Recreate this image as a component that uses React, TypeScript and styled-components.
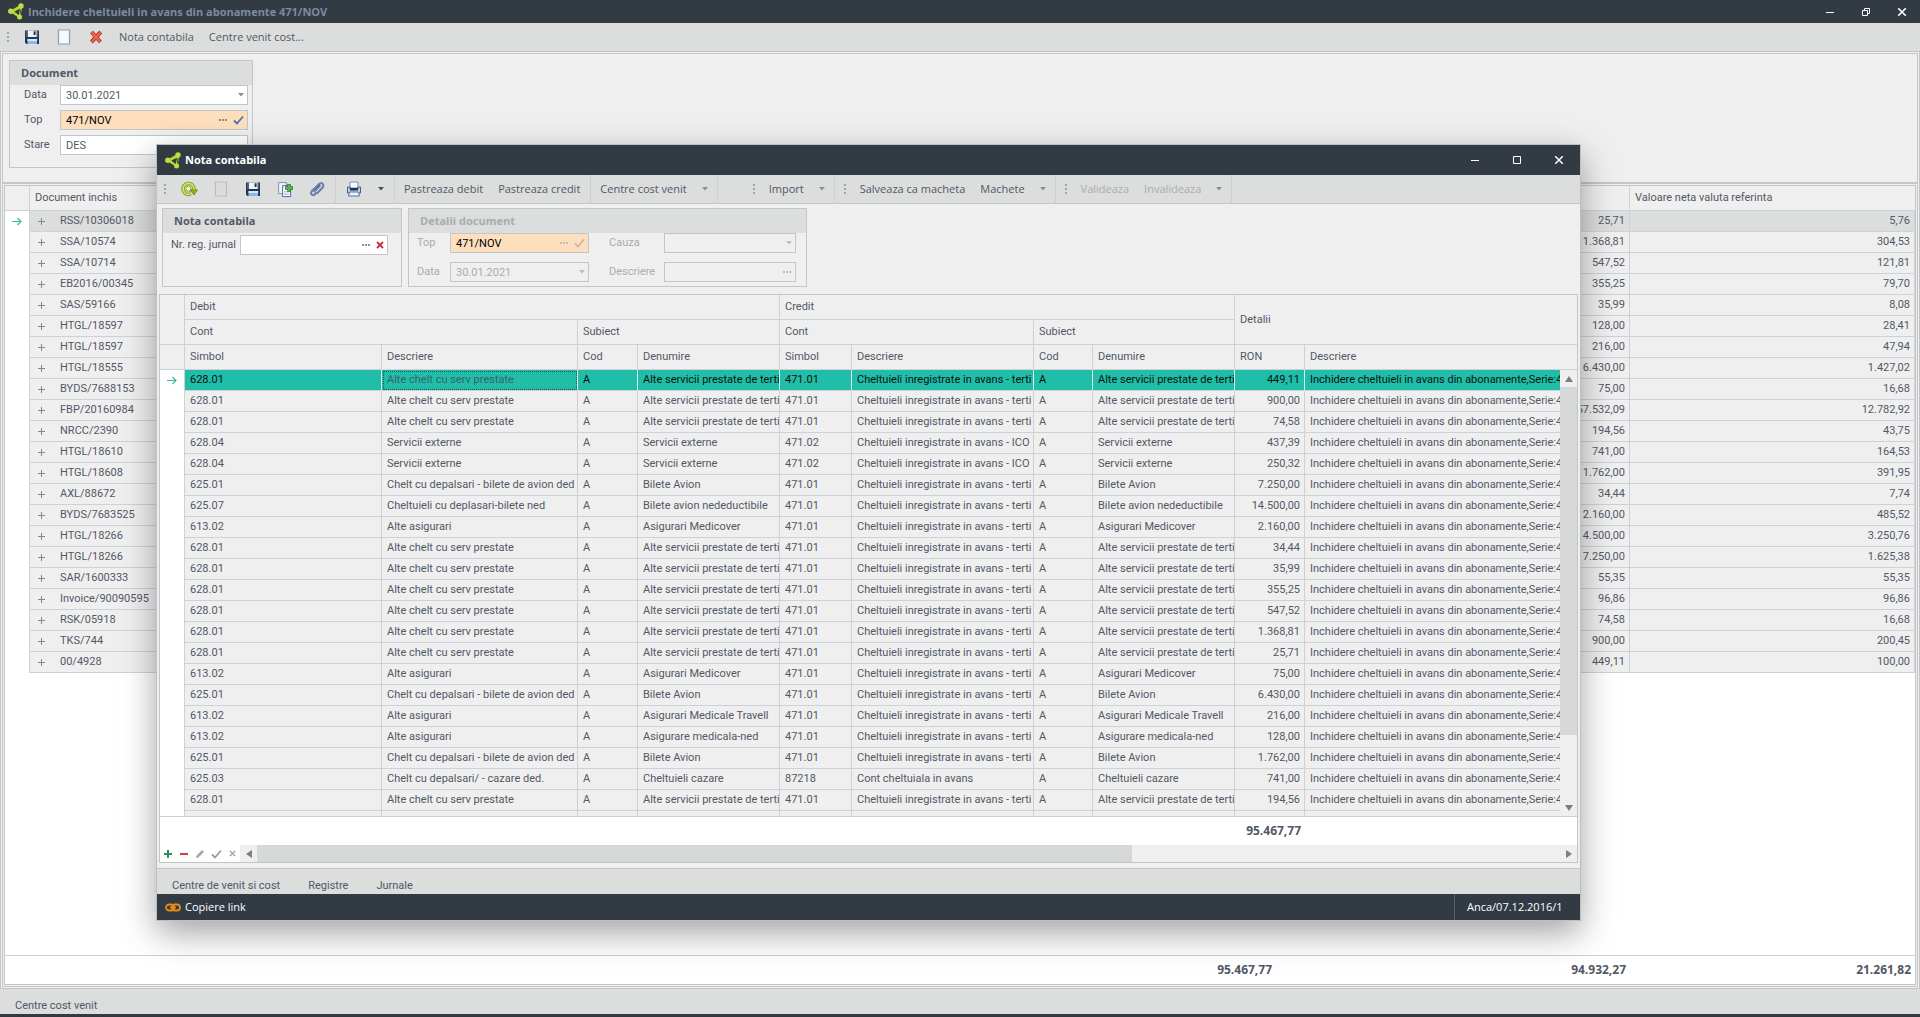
import React from "react";
import styled, { createGlobalStyle, css } from "styled-components";

const c = {
  dark: "#323a44",
  bar: "#dcdddd",
  face: "#efefef",
  line: "#c3c6c8",
  rule: "#cfd2d4",
  text: "#525866",
  muted: "#a9acb0",
  accent: "#20bda8",
  field: "#fddfbd",
};
const uiFont = '"Open Sans", "Noto Sans", sans-serif';
const gridFont = 'Roboto, "Liberation Sans", sans-serif';

const GlobalStyle = createGlobalStyle`
  *, *::before, *::after { box-sizing: border-box; }
  body { margin: 0; background: ${c.face}; color: ${c.text}; font: 11px/16px ${gridFont}; overflow: hidden; }
  button, input { font: inherit; color: inherit; }
  button { border: 0; padding: 0; background: none; }
  svg { display: block; }
`;

/* ---------- shell ---------- */

const Desktop = styled.main`
  position: relative;
  display: flex;
  flex-direction: column;
  height: 100vh;
`;

const TitleBar = styled.header<{ $modal?: boolean }>`
  display: flex;
  align-items: center;
  flex: none;
  gap: 4px;
  height: ${p => (p.$modal ? 30 : 23)}px;
  padding-left: 8px;
  background: ${c.dark};
  h1 {
    flex: 1;
    margin: 0;
    font: bold 11px/16px ${uiFont};
    color: ${p => (p.$modal ? "#fff" : "#7d8ba0")};
  }
`;

const CaptionButton = styled.button<{ $modal?: boolean }>`
  display: grid;
  place-items: center;
  width: ${p => (p.$modal ? 42 : 36)}px;
  height: 100%;
  margin-left: -4px;
  color: #fff;
`;

const ToolBar = styled.nav`
  display: flex;
  align-items: center;
  flex: none;
  height: 29px;
  border-bottom: 1px solid ${c.line};
  background: ${c.bar};
  font: 11px/16px ${uiFont};
`;

const Grip = styled.span`
  flex: none;
  width: 16px;
  height: 11px;
  background: radial-gradient(circle at 8px 1px, #a2a4a6 1px, transparent 1px) 0 0 / 16px 4px;
`;

const ToolIcon = styled.button`
  display: grid;
  place-items: center;
  flex: none;
  width: 32px;
  height: 28px;
`;

const ToolText = styled.button`
  flex: none;
  padding: 0 8px 0 7px;
  height: 28px;
  white-space: nowrap;
  &:disabled { color: ${c.muted}; }
`;

const ToolArrow = styled.button<{ $dark?: boolean }>`
  display: grid;
  place-items: center;
  flex: none;
  width: ${p => (p.$dark ? 22 : 20)}px;
  height: 28px;
  color: ${p => (p.$dark ? "#4c4f54" : "#8d9093")};
`;

const Separator = styled.i`
  flex: none;
  width: 1px;
  height: 28px;
  margin: 0 2px;
  background: #cfd0d1;
`;

const Gap = styled.i`
  flex: none;
  width: 26px;
`;

/* ---------- forms ---------- */

const Group = styled.fieldset<{ $width: number }>`
  width: ${p => p.$width}px;
  margin: 0;
  padding: 0;
  border: 1px solid ${c.line};
  min-width: 0;
`;

const GroupTitle = styled.div<{ $muted?: boolean }>`
  height: 24px;
  padding: 4px 11px;
  background: ${c.bar};
  font: bold 11px/16px ${uiFont};
  color: ${p => (p.$muted ? c.muted : c.text)};
`;

const Fields = styled.div<{ $cols: string; $gap: number; $height: number; $top?: number }>`
  display: grid;
  grid-template-columns: ${p => p.$cols};
  align-content: start;
  align-items: center;
  row-gap: ${p => p.$gap}px;
  height: ${p => p.$height}px;
  padding-top: ${p => p.$top ?? 0}px;
`;

const Label = styled.label<{ $muted?: boolean }>`
  line-height: 20px;
  color: ${p => (p.$muted ? c.muted : c.text)};
`;

const Box = styled.span<{ $tone?: "plain" | "warm" | "off"; $faint?: boolean }>`
  display: flex;
  align-items: center;
  height: 20px;
  border: 1px solid ${c.line};
  padding-right: 3px;
  gap: 5px;
  background: ${p => (p.$tone === "warm" ? c.field : p.$tone === "off" ? c.face : "#fff")};
  color: ${p => (p.$tone === "warm" ? "#000" : p.$tone === "off" ? c.muted : c.text)};
  input {
    flex: 1;
    min-width: 0;
    height: 18px;
    padding: 0 5px;
    border: 0;
    outline: 0;
    background: transparent;
  }
  button { color: ${p => (p.$faint ? "#bcbec0" : "#8b8e92")}; }
`;

/* ---------- grids ---------- */

const Table = styled.table`
  width: 100%;
  table-layout: fixed;
  border-collapse: separate;
  border-spacing: 0;
`;

const cell = css`
  padding: 0 4px 0 5px;
  overflow: hidden;
  white-space: nowrap;
  border-right: 1px solid ${c.rule};
  border-bottom: 1px solid ${c.rule};
  background: ${c.face};
`;

const Th = styled.th<{ $end?: boolean }>`
  ${cell}
  height: 25px;
  font-weight: normal;
  text-align: left;
  ${p => p.$end && "border-right: 0;"}
`;

const Td = styled.td<{ $num?: boolean; $focus?: boolean }>`
  ${cell}
  height: 21px;
  line-height: 20px;
  padding-right: ${p => (p.$num ? 4 : 0)}px;
  text-align: ${p => (p.$num ? "right" : "left")};
  &:last-child { ${p => !p.$num && "border-right: 0;"} }
  ${p => p.$focus && css`outline: 1px dotted #2b4d54; outline-offset: -2px;`}
`;

const Mark = styled.td`
  height: 21px;
  padding: 0 0 0 7px;
  border-right: 1px solid ${c.rule};
  background: #fff;
`;

const MainRow = styled.tr<{ $selected: boolean }>`
  ${p => p.$selected && css`${Td} { background: ${c.bar}; }`}
`;

const EntryRow = styled.tr<{ $selected: boolean }>`
  ${p => p.$selected && css`
    ${Td} { background: ${c.accent}; color: #08110f; border-right-color: #e3f3f1; }
    ${Td}:nth-child(3) { color: #3b6468; }
  `}
`;

const DocCell = styled.span`
  display: flex;
  align-items: center;
  gap: 15px;
  padding-left: 3px;
`;

const Total = styled.output<{ $width?: number }>`
  flex: ${p => (p.$width ? "none" : 1)};
  width: ${p => (p.$width ? p.$width + "px" : "auto")};
  padding-right: 4px;
  text-align: right;
  font: bold 12px/16px ${uiFont};
`;

const TotalRow = styled.div`
  display: flex;
  align-items: center;
  flex: none;
  height: 29px;
  border-top: 1px solid ${c.rule};
  background: #fff;
`;

/* ---------- document window ---------- */

const Frame = styled.div`
  display: flex;
  flex-direction: column;
  flex: 1;
  min-height: 0;
  padding: 1px;
  border: solid ${c.line};
  border-width: 0 1px 1px;
`;

const InnerFrame = styled.div`
  display: flex;
  flex-direction: column;
  flex: 1;
  min-height: 0;
  border: 1px solid ${c.line};
`;

const HeadPanel = styled.section`
  flex: none;
  height: 130px;
  padding: 6px;
  border-bottom: 2px solid ${c.line};
`;

const MainGrid = styled.section`
  display: flex;
  flex-direction: column;
  flex: 1;
  min-height: 0;
  margin: 1px;
  border: 1px solid ${c.line};
  background: #fff;
`;

const GridArea = styled.div`
  flex: 1;
  min-height: 0;
  overflow: hidden;
`;

const TabBar = styled.nav`
  display: flex;
  align-items: flex-end;
  flex: none;
  gap: 28px;
  height: 25px;
  padding-left: 15px;
  background: ${c.bar};
`;

const BottomStrip = styled.footer`
  flex: none;
  height: 3px;
  background: ${c.dark};
`;

/* ---------- entry window ---------- */

const Dialog = styled.section`
  position: absolute;
  top: 144px;
  right: 339px;
  bottom: 96px;
  left: 156px;
  display: flex;
  flex-direction: column;
  border: 1px solid #bcc0c3;
  background: ${c.face};
  box-shadow: 0 12px 32px rgba(0, 0, 0, 0.36);
`;

const Groups = styled.div`
  display: flex;
  align-items: flex-start;
  gap: 6px;
  padding: 4px 5px 7px;
`;

const EntryGrid = styled.div`
  display: flex;
  flex-direction: column;
  flex: 1;
  min-height: 0;
  margin: 0 2px 5px;
  border: 1px solid ${c.line};
  background: #fff;
`;

const EntryBody = styled.div`
  display: flex;
  flex: 1;
  min-height: 0;
  overflow: hidden;
`;

const Rows = styled.div`
  flex: 1;
  min-width: 0;
  overflow: hidden;
`;

const VScroll = styled.div`
  display: flex;
  flex-direction: column;
  align-items: center;
  flex: none;
  width: 17px;
  background: ${c.face};
  color: #7b7d80;
  i { width: 17px; flex: 347; background: #d6d7d7; }
  u { flex: 64; }
`;

const HScroll = styled.div`
  display: flex;
  flex: 1;
  height: 17px;
  background: ${c.face};
  color: #7b7d80;
  i { flex: 874; background: #d6d7d7; }
  u { flex: 427; }
`;

const ScrollButton = styled.button`
  display: grid;
  place-items: center;
  flex: none;
  width: 17px;
  height: 17px;
`;

const Navigator = styled.div`
  display: flex;
  flex: none;
  height: 17px;
  border-bottom: 0;
`;

const NavButton = styled.button`
  display: grid;
  place-items: center;
  width: 16px;
  height: 17px;
`;

const DialogTabs = styled.div`
  flex: none;
  border-top: 1px solid ${c.line};
`;

const StatusBar = styled.footer`
  display: flex;
  align-items: stretch;
  justify-content: space-between;
  flex: none;
  height: 26px;
  padding-left: 8px;
  background: ${c.dark};
  color: #fff;
  font: 11px/26px ${uiFont};
  a { display: flex; align-items: center; gap: 4px; color: inherit; text-decoration: none; }
  span { width: 126px; padding-left: 12px; border-left: 1px solid #57606b; }
`;

/* ---------- drawings ---------- */

const Logo = () => (
  <svg width="16" height="17" viewBox="0 0 16 17">
    <path d="M13 3 3 8.500l8.500 5.500L12.500 8.500 13 3z" fill="none" stroke="#b4d334" strokeWidth="2" strokeLinejoin="round" />
    <path d="M13.500 3 9 4 3 8.200l4 3.300 5 2.500-3.500-4L6.500 8.500 11 6.500z" fill="#b4d334" />
    <path d="M11.300 6.200 6.500 8.700l4.300 2.700z" fill={c.dark} />
    <path d="M12.600 6.500v5" stroke={c.dark} strokeWidth=".8" />
    <g fill="#bfdc45"><circle cx="13" cy="3" r="2.700" /><circle cx="2.800" cy="8.300" r="2.700" /><circle cx="11.600" cy="14" r="2.500" /></g>
  </svg>
);

const Floppy = () => (
  <svg width="16" height="16" viewBox="0 0 16 16">
    <path d="M1 1.5h14V15H2.5L1 13.5z" fill="#27364f" />
    <path d="M2 2h2v6H2zM12.6 2H14v6h-1.4z" fill="#4e6283" />
    <path d="M4 1.5h8.6V8H4z" fill="#eef3f8" /><path d="M9.6 2.3h2V6h-2z" fill="#27364f" />
    <path d="M3.5 10h9.6v5H3.5z" fill="#8db9e8" /><path d="M3.5 10h9.6v2H3.5z" fill="#d5e8fa" />
  </svg>
);

const Page = ({ off }: { off?: boolean }) => (
  <svg width="14" height="16" viewBox="0 0 14 16">
    <path d="M1.5 1h11v14h-11z" fill={off ? "#dcdcdc" : "#f5faff"} stroke={off ? "#bdbdbd" : "#8b9cc0"} strokeWidth="1.2" />
  </svg>
);

const RedCross = () => (
  <svg width="14" height="14" viewBox="0 0 14 14">
    <path d="M2.500 2 11.500 12M11.800 2 2.300 12" stroke="#b8392b" strokeWidth="4" />
    <path d="M2.800 2.500 11.200 11.600M11.500 2.500 2.700 11.600" stroke="#ea6a57" strokeWidth="2" />
  </svg>
);

const Refresh = () => (
  <svg width="17" height="16" viewBox="0 0 17 16">
    <path d="M13 8A5.500 5.500 0 1 0 10 12.800" fill="none" stroke="#7d9a12" strokeWidth="3.400" />
    <path d="M13 8A5.500 5.500 0 1 0 10 12.800" fill="none" stroke="#cfe36a" strokeWidth="1.800" />
    <circle cx="7.500" cy="7.800" r="2.600" fill="#eef3df" stroke="#8aa627" />
    <path d="m8.800 9 1.800 2" stroke="#8aa627" strokeWidth="1.200" />
    <path d="M9.500 8.800h7L13 14z" fill="#93b31c" stroke="#6b860c" strokeWidth=".8" />
  </svg>
);

const CopyPlus = () => (
  <svg width="17" height="17" viewBox="0 0 17 17">
    <path d="M1.6 1.6h8v11h-8z" fill="#eef4fb" stroke="#7f90b5" />
    <path d="M5.6 4.6h8v11h-8z" fill="#f8fbff" stroke="#53689a" />
    <path d="M7 10.500h5M7 12h5M7 13.500h5" stroke="#a9bddb" strokeWidth=".8" />
    <path d="M12 3v8M8 7h8" stroke="#2c7d2b" strokeWidth="3.400" /><path d="M12 3.600v6.800M8.600 7h6.800" stroke="#59b346" strokeWidth="2" />
  </svg>
);

const Clip = () => (
  <svg width="16" height="16" viewBox="0 0 16 16" fill="none" strokeLinecap="round" strokeLinejoin="round">
    <path d="M5.500 10.500 10.800 5M8.500 11.800l5-5.200C15.800 4 13 .8 10.300 3L3 10c-2.300 2.600.6 5.300 3 3.200l1-1" stroke="#3c5a90" strokeWidth="1.800" />
    <path d="M5.500 10.500 10.800 5M8.500 11.800l5-5.200C15.800 4 13 .8 10.300 3L3 10c-2.300 2.600.6 5.300 3 3.200l1-1" stroke="#a9c4e8" strokeWidth=".6" />
  </svg>
);

const Printer = () => (
  <svg width="16" height="16" viewBox="0 0 16 16">
    <path d="M4 1h8v6H4z" fill="#f5f8fd" stroke="#7f8fb0" />
    <path d="M1.5 6H4v2h8V6h2.500v6h-13z" fill="#c3cfe6" stroke="#4a5c8c" />
    <path d="M4 7h8v2.500H4z" fill="#27334d" />
    <path d="M3.500 11h9l1 4h-11z" fill="#e9f2fd" stroke="#5b74ad" />
  </svg>
);

const Down = () => <svg width="6" height="4" viewBox="0 0 6 4"><path d="M0 0h6L3 3.500z" fill="currentColor" /></svg>;
const Dots = () => <svg width="10" height="3" viewBox="0 0 10 3"><path d="M1 0h2v2H1zM4 0h2v2H4zM7 0h2v2H7z" fill="currentColor" /></svg>;
const Tick = ({ color }: { color: string }) => (
  <svg width="11" height="10" viewBox="0 0 11 10"><path d="m1 5.500 3 3L10 1.500" fill="none" stroke={color} strokeWidth="1.800" /></svg>
);
const Cross = ({ color, size = 8, w = 1.8 }: { color: string; size?: number; w?: number }) => (
  <svg width={size} height={size} viewBox="0 0 8 8"><path d="m1 1 6 6M7 1 1 7" stroke={color} strokeWidth={w} /></svg>
);
const Plus = ({ color, w }: { color: string; w: number }) => (
  <svg width="8" height="8" viewBox="0 0 8 8"><path d="M4 0v8M0 4h8" stroke={color} strokeWidth={w} /></svg>
);
const Thin = ({ color }: { color: string }) => (
  <svg width="7" height="7" viewBox="0 0 7 7"><path d="M3.500 0v7M0 3.500h7" stroke={color} /></svg>
);
const Arrow = () => (
  <svg width="10" height="9" viewBox="0 0 10 9"><path d="M0 4.500h8.500M5.500 1 9 4.500 5.500 8" fill="none" stroke="#3bb8a5" strokeWidth="1.200" /></svg>
);
const Tri = ({ d }: { d: string }) => <svg width="8" height="8" viewBox="0 0 8 8"><path d={d} fill="currentColor" /></svg>;
const Minimize = () => <svg width="8" height="8" viewBox="0 0 8 8"><path d="M0 4.500h8" stroke="#fff" /></svg>;
const Maximize = () => <svg width="8" height="8" viewBox="0 0 8 8"><path d="M.5.5h7v7h-7z" fill="none" stroke="#fff" /></svg>;
const Restore = () => (
  <svg width="8" height="8" viewBox="0 0 8 8"><path d="M.5 2.500h5v5h-5zM2.500 2.500v-2h5v5h-2" fill="none" stroke="#fff" /></svg>
);
const Pencil = () => (
  <svg width="9" height="9" viewBox="0 0 9 9"><path d="M2 7 7 2" stroke="#a6a6a6" strokeWidth="2.600" /><path d="m0 9 1-3 2 2z" fill="#8c8c8c" /></svg>
);
const ChainLink = () => (
  <svg width="16" height="9" viewBox="0 0 16 9" fill="none" stroke="#e88a1a" strokeWidth="1.800">
    <rect x="1" y="1.500" width="8" height="6" rx="3" /><rect x="7" y="1.500" width="8" height="6" rx="3" /><path d="M5 4.500h6" />
  </svg>
);

/* ---------- data ---------- */

const documents: [string, string, string][] = [
  ["RSS/10306018", "25,71", "5,76"],
  ["SSA/10574", "1.368,81", "304,53"],
  ["SSA/10714", "547,52", "121,81"],
  ["EB2016/00345", "355,25", "79,70"],
  ["SAS/59166", "35,99", "8,08"],
  ["HTGL/18597", "128,00", "28,41"],
  ["HTGL/18597", "216,00", "47,94"],
  ["HTGL/18555", "6.430,00", "1.427,02"],
  ["BYDS/7688153", "75,00", "16,68"],
  ["FBP/20160984", "57.532,09", "12.782,92"],
  ["NRCC/2390", "194,56", "43,75"],
  ["HTGL/18610", "741,00", "164,53"],
  ["HTGL/18608", "1.762,00", "391,95"],
  ["AXL/88672", "34,44", "7,74"],
  ["BYDS/7683525", "2.160,00", "485,52"],
  ["HTGL/18266", "14.500,00", "3.250,76"],
  ["HTGL/18266", "7.250,00", "1.625,38"],
  ["SAR/1600333", "55,35", "55,35"],
  ["Invoice/90090595", "96,86", "96,86"],
  ["RSK/05918", "74,58", "16,68"],
  ["TKS/744", "900,00", "200,45"],
  ["00/4928", "449,11", "100,00"],
];

const serv = "Alte chelt cu serv prestate";
const third = "Alte servicii prestate de terti";
const bilete = "Chelt cu depalsari - bilete de avion ded";
const prepaid = "Cheltuieli inregistrate in avans - terti";
const prepaidIco = "Cheltuieli inregistrate in avans - ICO";

const entry = (account: string, text: string, name: string, sum: string, credit = "471.01", creditText = prepaid) =>
  [account, text, "A", name, credit, creditText, "A", name, sum, "Inchidere cheltuieli in avans din abonamente,Serie:471/NOV"];

const entries = [
  entry("628.01", serv, third, "449,11"),
  entry("628.01", serv, third, "900,00"),
  entry("628.01", serv, third, "74,58"),
  entry("628.04", "Servicii externe", "Servicii externe", "437,39", "471.02", prepaidIco),
  entry("628.04", "Servicii externe", "Servicii externe", "250,32", "471.02", prepaidIco),
  entry("625.01", bilete, "Bilete Avion", "7.250,00"),
  entry("625.07", "Cheltuieli cu deplasari-bilete ned", "Bilete avion nedeductibile", "14.500,00"),
  entry("613.02", "Alte asigurari", "Asigurari Medicover", "2.160,00"),
  entry("628.01", serv, third, "34,44"),
  entry("628.01", serv, third, "35,99"),
  entry("628.01", serv, third, "355,25"),
  entry("628.01", serv, third, "547,52"),
  entry("628.01", serv, third, "1.368,81"),
  entry("628.01", serv, third, "25,71"),
  entry("613.02", "Alte asigurari", "Asigurari Medicover", "75,00"),
  entry("625.01", bilete, "Bilete Avion", "6.430,00"),
  entry("613.02", "Alte asigurari", "Asigurari Medicale Travell", "216,00"),
  entry("613.02", "Alte asigurari", "Asigurare medicala-ned", "128,00"),
  entry("625.01", bilete, "Bilete Avion", "1.762,00"),
  entry("625.03", "Chelt cu depalsari/ - cazare ded.", "Cheltuieli cazare", "741,00", "87218", "Cont cheltuiala in avans"),
  entry("628.01", serv, third, "194,56"),
  Array<string>(10).fill(""),
];

const headings = ["Simbol", "Descriere", "Cod", "Denumire", "Simbol", "Descriere", "Cod", "Denumire", "RON", "Descriere"];

const EntryCols = () => (
  <colgroup>
    {[25, 197, 196, 60, 142, 72, 182, 59, 142, 70].map((w, i) => <col key={i} width={w} />)}
    <col />
  </colgroup>
);

/* ---------- windows ---------- */

const EntryDialog = () => (
  <Dialog role="dialog" aria-label="Nota contabila">
    <TitleBar $modal>
      <Logo /><h1>Nota contabila</h1>
      <CaptionButton $modal aria-label="Minimize"><Minimize /></CaptionButton>
      <CaptionButton $modal aria-label="Maximize"><Maximize /></CaptionButton>
      <CaptionButton $modal aria-label="Close"><Cross color="#fff" size={10} w={1.2} /></CaptionButton>
    </TitleBar>
    <ToolBar>
      <Grip />
      <ToolIcon aria-label="Refresh"><Refresh /></ToolIcon>
      <ToolIcon aria-label="New" disabled><Page off /></ToolIcon>
      <ToolIcon aria-label="Save"><Floppy /></ToolIcon>
      <ToolIcon aria-label="Duplicate"><CopyPlus /></ToolIcon>
      <ToolIcon aria-label="Attach"><Clip /></ToolIcon>
      <Separator />
      <ToolIcon aria-label="Print"><Printer /></ToolIcon>
      <ToolArrow $dark aria-label="Print options"><Down /></ToolArrow>
      <Separator />
      <ToolText>Pastreaza debit</ToolText>
      <ToolText>Pastreaza credit</ToolText>
      <Separator />
      <ToolText>Centre cost venit</ToolText>
      <ToolArrow aria-label="Centre options"><Down /></ToolArrow>
      <Separator />
      <Gap />
      <Grip />
      <ToolText>Import</ToolText>
      <ToolArrow aria-label="Import options"><Down /></ToolArrow>
      <Separator />
      <Grip />
      <ToolText>Salveaza ca macheta</ToolText>
      <ToolText>Machete</ToolText>
      <ToolArrow aria-label="Machete options"><Down /></ToolArrow>
      <Separator />
      <Grip />
      <ToolText disabled>Valideaza</ToolText>
      <ToolText disabled>Invalideaza</ToolText>
      <ToolArrow aria-label="Validation options"><Down /></ToolArrow>
      <Separator />
    </ToolBar>
    <Groups>
      <Group $width={240}>
        <GroupTitle>Nota contabila</GroupTitle>
        <Fields $cols="8px 69px 148px" $gap={8} $height={53} $top={2}>
          <span /><Label htmlFor="journal">Nr. reg. jurnal</Label>
          <Box><input id="journal" /><button aria-label="Browse"><Dots /></button><button aria-label="Clear"><Cross color="#d22b3b" /></button></Box>
        </Fields>
      </Group>
      <Group $width={399}>
        <GroupTitle $muted>Detalii document</GroupTitle>
        <Fields $cols="8px 33px 139px 20px 55px 132px" $gap={9} $height={53}>
          <span /><Label $muted htmlFor="dTop">Top</Label>
          <Box $tone="warm" $faint><input id="dTop" defaultValue="471/NOV" /><button aria-label="Browse"><Dots /></button><button aria-label="Accept"><Tick color="#c3bba9" /></button></Box>
          <span /><Label $muted htmlFor="dCauza">Cauza</Label>
          <Box $tone="off" $faint><input id="dCauza" disabled /><button aria-label="Open"><Down /></button></Box>
          <span /><Label $muted htmlFor="dData">Data</Label>
          <Box $tone="off" $faint><input id="dData" defaultValue="30.01.2021" disabled /><button aria-label="Open"><Down /></button></Box>
          <span /><Label $muted htmlFor="dDesc">Descriere</Label>
          <Box $tone="off" $faint><input id="dDesc" disabled /><button aria-label="Browse"><Dots /></button></Box>
        </Fields>
      </Group>
    </Groups>
    <EntryGrid>
      <Table>
        <EntryCols />
        <thead>
          <tr><Th rowSpan={2} /><Th colSpan={4}>Debit</Th><Th colSpan={4}>Credit</Th><Th colSpan={2} rowSpan={2} $end>Detalii</Th></tr>
          <tr>
            <Th colSpan={2}>Cont</Th><Th colSpan={2}>Subiect</Th>
            <Th colSpan={2}>Cont</Th><Th colSpan={2}>Subiect</Th>
          </tr>
          <tr>
            <Th />
            {headings.map((h, i) => <Th key={i} $end={i === 9}>{h}</Th>)}
          </tr>
        </thead>
      </Table>
      <EntryBody>
        <Rows>
          <Table>
            <EntryCols />
            <tbody>
              {entries.map((row, r) => (
                <EntryRow key={r} $selected={r === 0}>
                  <Mark>{r === 0 && <Arrow />}</Mark>
                  {row.map((v, i) => <Td key={i} $num={i === 8} $focus={r === 0 && i === 1}>{v}</Td>)}
                </EntryRow>
              ))}
            </tbody>
          </Table>
        </Rows>
        <VScroll>
          <ScrollButton aria-label="Up"><Tri d="M0 7h8L4 1z" /></ScrollButton>
          <i /><u />
          <ScrollButton aria-label="Down"><Tri d="M0 1h8L4 7z" /></ScrollButton>
        </VScroll>
      </EntryBody>
      <TotalRow><Total $width={1145}>95.467,77</Total></TotalRow>
      <Navigator>
        <NavButton aria-label="Add"><Plus color="#2f8f5b" w={2} /></NavButton>
        <NavButton aria-label="Remove"><svg width="8" height="8" viewBox="0 0 8 8"><path d="M0 4h8" stroke="#cf3a44" strokeWidth="2" /></svg></NavButton>
        <NavButton aria-label="Edit"><Pencil /></NavButton>
        <NavButton aria-label="Post"><Tick color="#9b9b9b" /></NavButton>
        <NavButton aria-label="Cancel"><Cross color="#9b9b9b" size={7} w={1.6} /></NavButton>
        <HScroll>
          <ScrollButton aria-label="Left"><Tri d="M7 0v8L1 4z" /></ScrollButton>
          <i /><u />
          <ScrollButton aria-label="Right"><Tri d="M1 0v8l6-4z" /></ScrollButton>
        </HScroll>
      </Navigator>
    </EntryGrid>
    <DialogTabs>
      <TabBar>
        <button>Centre de venit si cost</button><button>Registre</button><button>Jurnale</button>
      </TabBar>
    </DialogTabs>
    <StatusBar>
      <a href="#link"><ChainLink />Copiere link</a>
      <span>Anca/07.12.2016/1</span>
    </StatusBar>
  </Dialog>
);

export default function App() {
  return (
    <Desktop>
      <GlobalStyle />
      <TitleBar>
        <Logo /><h1>Inchidere cheltuieli in avans din abonamente 471/NOV</h1>
        <CaptionButton aria-label="Minimize"><Minimize /></CaptionButton>
        <CaptionButton aria-label="Restore"><Restore /></CaptionButton>
        <CaptionButton aria-label="Close"><Cross color="#fff" size={10} w={1.3} /></CaptionButton>
      </TitleBar>
      <ToolBar>
        <Grip />
        <ToolIcon aria-label="Save"><Floppy /></ToolIcon>
        <ToolIcon aria-label="New"><Page /></ToolIcon>
        <ToolIcon aria-label="Delete"><RedCross /></ToolIcon>
        <ToolText>Nota contabila</ToolText>
        <ToolText>Centre venit cost...</ToolText>
      </ToolBar>
      <Frame>
        <InnerFrame>
          <HeadPanel>
            <Group $width={244}>
              <GroupTitle>Document</GroupTitle>
              <Fields $cols="14px 36px 188px" $gap={5} $height={82}>
                <span /><Label htmlFor="data">Data</Label>
                <Box><input id="data" defaultValue="30.01.2021" /><button aria-label="Open"><Down /></button></Box>
                <span /><Label htmlFor="top">Top</Label>
                <Box $tone="warm"><input id="top" defaultValue="471/NOV" /><button aria-label="Browse"><Dots /></button><button aria-label="Accept"><Tick color="#4f72b0" /></button></Box>
                <span /><Label htmlFor="stare">Stare</Label>
                <Box><input id="stare" defaultValue="DES" /></Box>
              </Fields>
            </Group>
          </HeadPanel>
          <MainGrid>
            <GridArea>
              <Table>
                <colgroup><col width="25" /><col /><col width="354" /><col width="285" /></colgroup>
                <thead><tr><Th /><Th>Document inchis</Th><Th /><Th $end>Valoare neta valuta referinta</Th></tr></thead>
                <tbody>
                  {documents.map(([doc, net, ref], r) => (
                    <MainRow key={r} $selected={r === 0}>
                      <Mark>{r === 0 && <Arrow />}</Mark>
                      <Td><DocCell><button aria-label="Expand"><Thin color="#85898e" /></button>{doc}</DocCell></Td>
                      <Td $num>{net}</Td>
                      <Td $num>{ref}</Td>
                    </MainRow>
                  ))}
                </tbody>
              </Table>
            </GridArea>
            <TotalRow>
              <Total>95.467,77</Total><Total $width={354}>94.932,27</Total><Total $width={285}>21.261,82</Total>
            </TotalRow>
          </MainGrid>
        </InnerFrame>
      </Frame>
      <TabBar><button>Centre cost venit</button></TabBar>
      <BottomStrip />
      <EntryDialog />
    </Desktop>
  );
}
